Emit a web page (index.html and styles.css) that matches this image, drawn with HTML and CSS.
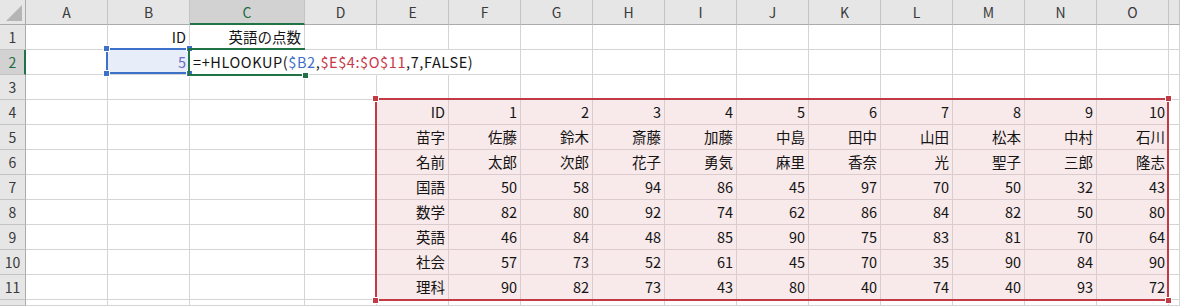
FILE: index.html
```html
<!DOCTYPE html>
<html lang="ja">
<head>
<meta charset="utf-8">
<title>HLOOKUP</title>
<link rel="stylesheet" href="styles.css">
</head>
<body>
<div class="sheet">
  <div class="grid">
    <div class="h corner"><svg width="26" height="25" viewBox="0 0 26 25"><polygon points="22,5 22,21 6,21" fill="#b5b5b5"/></svg></div>
    <div class="h">A</div><div class="h">B</div><div class="h hsel">C</div><div class="h">D</div><div class="h">E</div><div class="h">F</div><div class="h">G</div><div class="h">H</div><div class="h">I</div><div class="h">J</div><div class="h">K</div><div class="h">L</div><div class="h">M</div><div class="h">N</div><div class="h">O</div><div class="h"></div>

    <div class="r">1</div><div class="c"></div><div class="c">ID</div><div class="c">英語の点数</div><div class="c"></div><div class="c"></div><div class="c"></div><div class="c"></div><div class="c"></div><div class="c"></div><div class="c"></div><div class="c"></div><div class="c"></div><div class="c"></div><div class="c"></div><div class="c"></div><div class="c"></div>

    <div class="r rsel">2</div><div class="c"></div><div class="c bsel">5</div><div class="c formula ovf">=+HLOOKUP(<span class="fb">$B2</span>,<span class="fr">$E$4:$O$11</span>,7,FALSE)</div><div class="c ovf"></div><div class="c ovf"></div><div class="c"></div><div class="c"></div><div class="c"></div><div class="c"></div><div class="c"></div><div class="c"></div><div class="c"></div><div class="c"></div><div class="c"></div><div class="c"></div><div class="c"></div>

    <div class="r">3</div><div class="c"></div><div class="c"></div><div class="c"></div><div class="c"></div><div class="c"></div><div class="c"></div><div class="c"></div><div class="c"></div><div class="c"></div><div class="c"></div><div class="c"></div><div class="c"></div><div class="c"></div><div class="c"></div><div class="c"></div><div class="c"></div>

    <div class="r">4</div><div class="c"></div><div class="c"></div><div class="c"></div><div class="c"></div><div class="c pk">ID</div><div class="c pk">1</div><div class="c pk">2</div><div class="c pk">3</div><div class="c pk">4</div><div class="c pk">5</div><div class="c pk">6</div><div class="c pk">7</div><div class="c pk">8</div><div class="c pk">9</div><div class="c pk">10</div><div class="c"></div>

    <div class="r">5</div><div class="c"></div><div class="c"></div><div class="c"></div><div class="c"></div><div class="c pk">苗字</div><div class="c pk">佐藤</div><div class="c pk">鈴木</div><div class="c pk">斎藤</div><div class="c pk">加藤</div><div class="c pk">中島</div><div class="c pk">田中</div><div class="c pk">山田</div><div class="c pk">松本</div><div class="c pk">中村</div><div class="c pk">石川</div><div class="c"></div>

    <div class="r">6</div><div class="c"></div><div class="c"></div><div class="c"></div><div class="c"></div><div class="c pk">名前</div><div class="c pk">太郎</div><div class="c pk">次郎</div><div class="c pk">花子</div><div class="c pk">勇気</div><div class="c pk">麻里</div><div class="c pk">香奈</div><div class="c pk">光</div><div class="c pk">聖子</div><div class="c pk">三郎</div><div class="c pk">隆志</div><div class="c"></div>

    <div class="r">7</div><div class="c"></div><div class="c"></div><div class="c"></div><div class="c"></div><div class="c pk">国語</div><div class="c pk">50</div><div class="c pk">58</div><div class="c pk">94</div><div class="c pk">86</div><div class="c pk">45</div><div class="c pk">97</div><div class="c pk">70</div><div class="c pk">50</div><div class="c pk">32</div><div class="c pk">43</div><div class="c"></div>

    <div class="r">8</div><div class="c"></div><div class="c"></div><div class="c"></div><div class="c"></div><div class="c pk">数学</div><div class="c pk">82</div><div class="c pk">80</div><div class="c pk">92</div><div class="c pk">74</div><div class="c pk">62</div><div class="c pk">86</div><div class="c pk">84</div><div class="c pk">82</div><div class="c pk">50</div><div class="c pk">80</div><div class="c"></div>

    <div class="r">9</div><div class="c"></div><div class="c"></div><div class="c"></div><div class="c"></div><div class="c pk">英語</div><div class="c pk">46</div><div class="c pk">84</div><div class="c pk">48</div><div class="c pk">85</div><div class="c pk">90</div><div class="c pk">75</div><div class="c pk">83</div><div class="c pk">81</div><div class="c pk">70</div><div class="c pk">64</div><div class="c"></div>

    <div class="r">10</div><div class="c"></div><div class="c"></div><div class="c"></div><div class="c"></div><div class="c pk">社会</div><div class="c pk">57</div><div class="c pk">73</div><div class="c pk">52</div><div class="c pk">61</div><div class="c pk">45</div><div class="c pk">70</div><div class="c pk">35</div><div class="c pk">90</div><div class="c pk">84</div><div class="c pk">90</div><div class="c"></div>

    <div class="r">11</div><div class="c"></div><div class="c"></div><div class="c"></div><div class="c"></div><div class="c pk">理科</div><div class="c pk">90</div><div class="c pk">82</div><div class="c pk">73</div><div class="c pk">43</div><div class="c pk">80</div><div class="c pk">40</div><div class="c pk">74</div><div class="c pk">40</div><div class="c pk">93</div><div class="c pk">72</div><div class="c"></div>

    <div class="r"></div><div class="c"></div><div class="c"></div><div class="c"></div><div class="c"></div><div class="c"></div><div class="c"></div><div class="c"></div><div class="c"></div><div class="c"></div><div class="c"></div><div class="c"></div><div class="c"></div><div class="c"></div><div class="c"></div><div class="c"></div><div class="c"></div>
  </div>

  <div class="ref ref-blue">
    <span class="hd hd-b tl"></span><span class="hd hd-b tr"></span><span class="hd hd-b bl"></span><span class="hd hd-b br"></span>
  </div>
  <div class="active"><span class="fill"></span></div>
  <div class="ref ref-red">
    <span class="hd hd-r tl"></span><span class="hd hd-r tr"></span><span class="hd hd-r bl"></span><span class="hd hd-r br"></span>
  </div>
</div>
</body>
</html>
```

FILE: styles.css
```css
body {
  margin: 0;
  background: #ffffff;
}

.sheet {
  position: relative;
  width: 1180px;
  height: 306px;
  overflow: hidden;
  font-family: "Noto Sans CJK JP", "Noto Sans", sans-serif;
}

.grid {
  display: grid;
  grid-template-columns: 26px 82px 82px 115px repeat(12, 72px) 11px;
  grid-template-rows: repeat(12, 25px) 6px;
}

.c {
  box-sizing: border-box;
  border-right: 1px solid #d4d4d4;
  border-bottom: 1px solid #d4d4d4;
  font-size: 14.5px;
  line-height: 24px;
  text-align: right;
  padding-right: 3px;
  white-space: nowrap;
  color: #141414;
}

.h {
  box-sizing: border-box;
  background: #e6e6e6;
  border-right: 1px solid #c4c4c4;
  border-bottom: 1px solid #ababab;
  font-size: 14px;
  line-height: 24px;
  text-align: center;
  color: #3a3a3a;
}

.corner {
  border-right-color: #ababab;
  overflow: hidden;
}

.corner svg {
  display: block;
}

.hsel {
  background: #d2d2d2;
  border-bottom: 2px solid #217346;
  color: #1d6b41;
}

.r {
  box-sizing: border-box;
  background: #e6e6e6;
  border-right: 1px solid #ababab;
  border-bottom: 1px solid #c4c4c4;
  font-size: 14px;
  line-height: 24px;
  text-align: center;
  color: #3a3a3a;
}

.rsel {
  background: #d2d2d2;
  border-right: 2px solid #217346;
  color: #1d6b41;
  padding-left: 1px;
}

.bsel {
  background: #e8eef9;
  color: #6c6cc4;
}

.formula {
  text-align: left;
  padding-left: 3px;
  padding-right: 0;
  letter-spacing: 0.6px;
  color: #141414;
}

.ovf {
  border-right-color: transparent;
}

.fb {
  color: #3d70c8;
}

.fr {
  color: #c8374a;
}

.pk {
  background: #f8e9ea;
  border-right-color: #dccbcc;
  border-bottom-color: #dccbcc;
}

.ref {
  position: absolute;
  box-sizing: border-box;
  border: 2px solid;
}

.ref-blue {
  left: 106px;
  top: 48px;
  width: 84px;
  height: 26px;
  border-color: #3d70c8;
}

.ref-red {
  left: 375px;
  top: 98px;
  width: 794px;
  height: 203px;
  border-color: #c23a44;
}

.active {
  position: absolute;
  box-sizing: border-box;
  left: 188px;
  top: 48px;
  width: 117px;
  height: 28px;
  border: 2px solid #217346;
  border-right: none;
}

.fill {
  position: absolute;
  right: -4px;
  bottom: -5px;
  width: 5px;
  height: 5px;
  background: #217346;
  border: 1px solid #ffffff;
}

.hd {
  position: absolute;
  width: 5px;
  height: 5px;
  border: 1px solid #ffffff;
}

.hd-b { background: #3d70c8; }
.hd-r { background: #c23a44; }

.tl { left: -5px; top: -5px; }
.tr { right: -5px; top: -5px; }
.bl { left: -5px; bottom: -5px; }
.br { right: -5px; bottom: -5px; }
```
